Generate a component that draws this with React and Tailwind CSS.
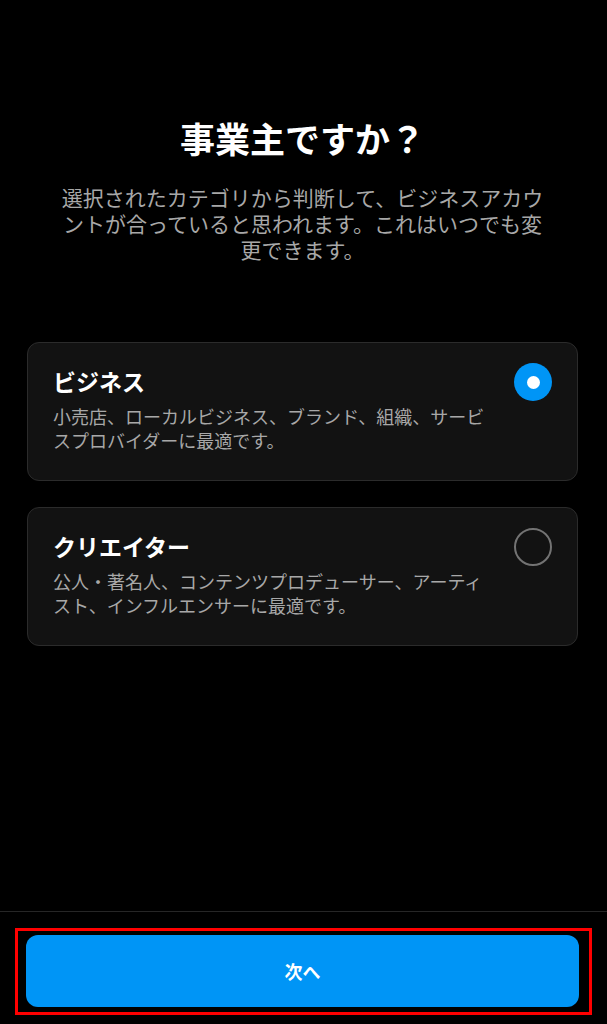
import { useState } from 'react';

const OPTIONS = [
  {
    id: 'business',
    title: 'ビジネス',
    description: '小売店、ローカルビジネス、ブランド、組織、サービスプロバイダーに最適です。',
  },
  {
    id: 'creator',
    title: 'クリエイター',
    description: '公人・著名人、コンテンツプロデューサー、アーティスト、インフルエンサーに最適です。',
  },
];

function Radio({ checked }) {
  if (checked) {
    return (
      <div className="w-[38px] h-[38px] shrink-0 rounded-full bg-[#0095f6] flex items-center justify-center">
        <div className="w-[13px] h-[13px] rounded-full bg-white" />
      </div>
    );
  }
  return <div className="w-[38px] h-[38px] shrink-0 rounded-full border-2 border-[#737373]" />;
}

export default function App() {
  const [selected, setSelected] = useState('business');

  return (
    <div className="h-[1024px] bg-black flex flex-col overflow-hidden font-['Noto_Sans_CJK_JP','Noto_Sans',sans-serif]">
      {/* Content */}
      <main className="flex-1 pl-[27px] pr-[29px] pt-[118px]">
        <h1 className="text-center text-white text-[35px] leading-[40px] font-bold">
          事業主ですか？
        </h1>
        <p className="mt-[26px] px-[30px] text-center text-[21px] leading-[26px] text-[#a8a8a8]">
          選択されたカテゴリから判断して、ビジネスアカウントが合っていると思われます。これはいつでも変更できます。
        </p>

        <div className="mt-[80px] flex flex-col gap-[26px]">
          {OPTIONS.map(opt => (
            <div
              key={opt.id}
              onClick={() => setSelected(opt.id)}
              className="flex items-start gap-[24px] rounded-[12px] border border-[#2b2b2b] bg-[#121212] pl-[25px] pr-[25px] pt-[20px] pb-[28px] cursor-pointer"
            >
              <div className="flex-1">
                <div className="mt-[3px] text-white text-[23px] leading-[30px] font-bold">
                  {opt.title}
                </div>
                <div className="mt-[8px] text-[18px] leading-[24px] text-[#a8a8a8]">
                  {opt.description}
                </div>
              </div>
              <Radio checked={selected === opt.id} />
            </div>
          ))}
        </div>
      </main>

      {/* Footer */}
      <footer className="border-t border-[#262626] pt-[16px] pb-[9px]">
        <div className="mx-[15px] border-[3px] border-[#ff0000] pl-[8px] pr-[10px] pt-[4px] pb-[5px]">
          <button className="w-full h-[72px] rounded-xl bg-[#0095f6] text-white text-[18px] font-semibold">
            次へ
          </button>
        </div>
      </footer>
    </div>
  );
}
